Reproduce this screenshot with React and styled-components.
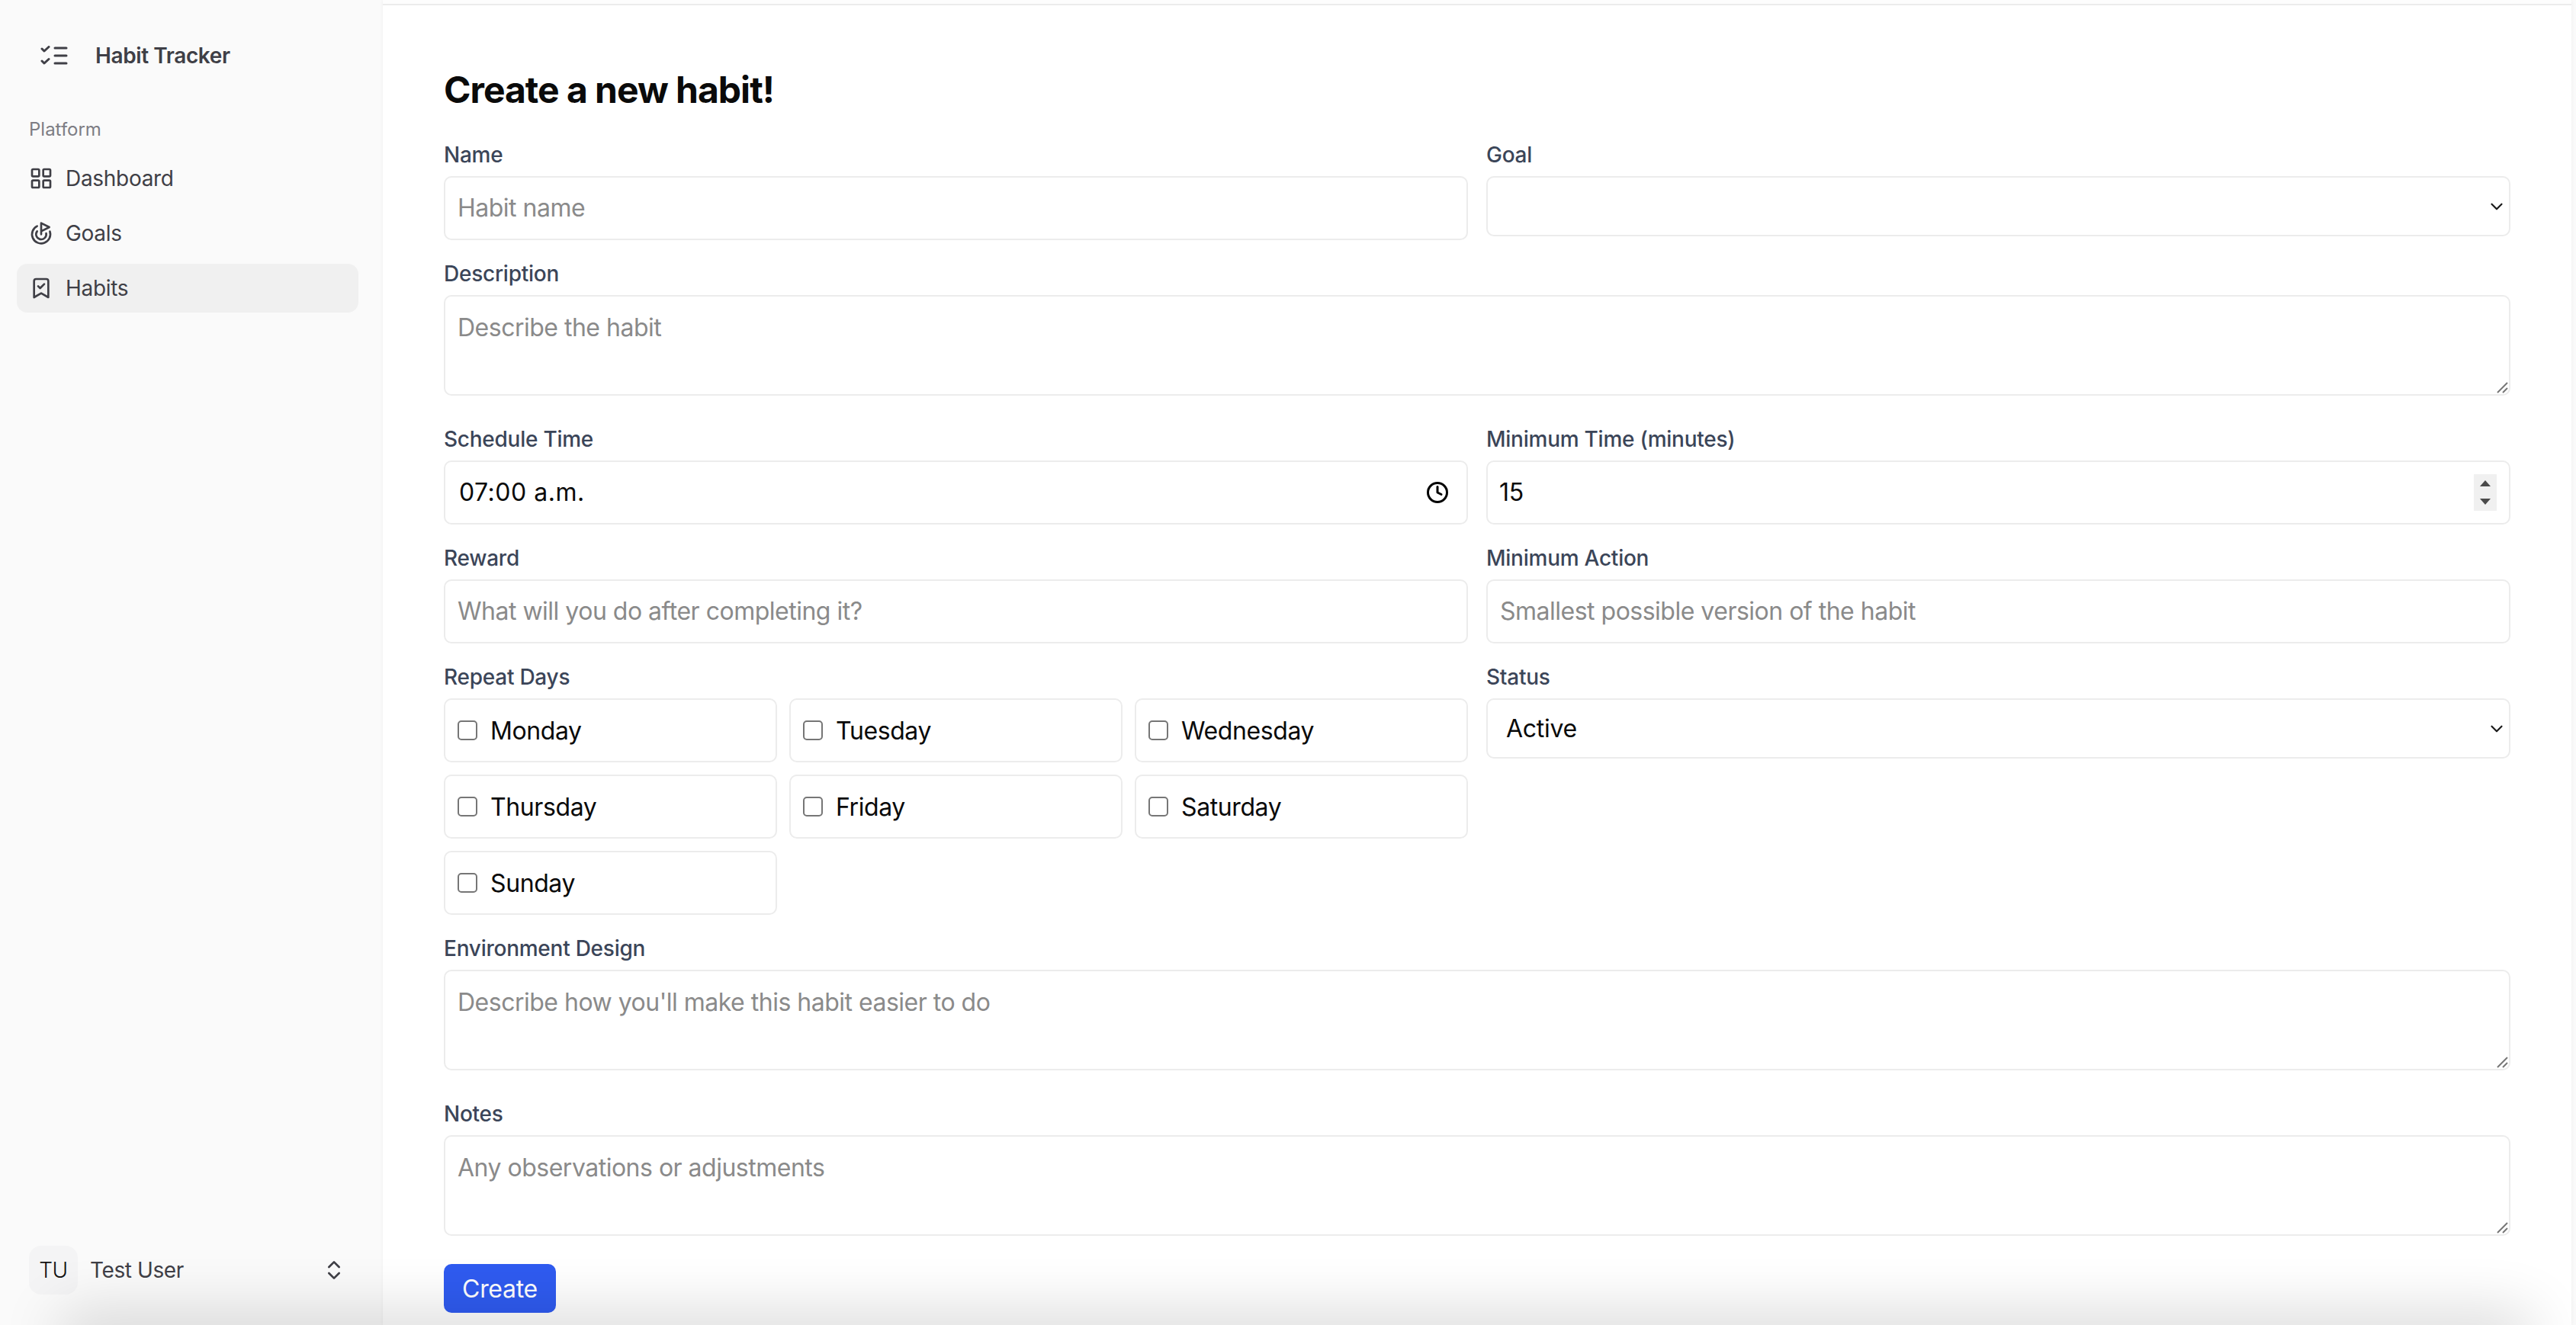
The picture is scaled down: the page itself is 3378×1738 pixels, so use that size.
import React from "react";
import styled, { createGlobalStyle } from "styled-components";
import { LayoutGrid, Goal, BookmarkCheck, ChevronsUpDown, Clock, ChevronDown } from "lucide-react";

const Global = createGlobalStyle`
  html, body { margin: 0; padding: 0; height: 100%; background: #fafafa; overflow: hidden; }
  * { box-sizing: border-box; }
  body { font-family: Inter, "Liberation Sans", sans-serif; }
`;

const Shell = styled.div`
  position: relative;
  display: flex;
  width: 3378px;
  height: 1738px;
  overflow: hidden;
  background: #fafafa;
`;

const Sidebar = styled.aside`
  width: 502px;
  flex: none;
  display: flex;
  flex-direction: column;
  padding: 41px 32px 24px 22px;
  color: #3f3f46;
`;

const Brand = styled.div`
  display: flex;
  align-items: center;
  height: 64px;
  padding-left: 31px;
  gap: 36px;
  font-size: 28px;
  font-weight: 600;
  letter-spacing: -0.4px;
`;

const GroupLabel = styled.div`
  margin-top: 49px;
  padding-left: 16px;
  height: 32px;
  line-height: 32px;
  font-size: 24px;
  color: #7d7d84;
`;

const Menu = styled.nav`
  display: flex;
  flex-direction: column;
  gap: 8px;
  margin-top: 16px;
`;

const MenuItem = styled.div`
  display: flex;
  align-items: center;
  gap: 16px;
  height: 64px;
  padding: 0 16px;
  border-radius: 14px;
  font-size: 28px;
  letter-spacing: -0.3px;
  background: ${(p) => (p.$active ? "#f0f0f0" : "transparent")};
`;

const UserRow = styled.div`
  margin-top: auto;
  display: flex;
  align-items: center;
  height: 64px;
  margin-bottom: 16px;
  padding: 0 16px;
  gap: 16px;
  font-size: 28px;
  letter-spacing: -0.4px;
`;

const Avatar = styled.div`
  width: 64px;
  height: 64px;
  flex: none;
  display: flex;
  align-items: center;
  justify-content: center;
  border-radius: 16px;
  background: #f4f4f5;
  color: #111;
  font-weight: 300;
`;

const UserName = styled.span`
  flex: 1;
`;

const MainFrame = styled.main`
  width: 2870px;
  flex: none;
  padding-top: 5px;
  background: #fdfdfd;
  box-shadow: 0 0 5px rgba(0, 0, 0, 0.05);
`;

const Card = styled.div`
  height: 100%;
  border-top: 2px solid #ececec;
  background: #fff;
  padding: 79px 80px 0;
`;

const Title = styled.h1`
  margin: 0 0 33px;
  font-size: 48px;
  line-height: 64px;
  font-weight: 700;
  letter-spacing: -1px;
  color: #0a0a0a;
`;

const FormGrid = styled.form`
  display: grid;
  grid-template-columns: 1fr 1fr;
  gap: 24px;
  align-items: start;
`;

const Field = styled.div`
  grid-column: ${(p) => (p.$full ? "1 / -1" : "auto")};
  min-width: 0;
`;

const Label = styled.label`
  display: block;
  height: 40px;
  line-height: 40px;
  margin-bottom: 8px;
  font-size: 28px;
  font-weight: 500;
  letter-spacing: -0.25px;
  color: #3b4558;
`;

const Control = styled.div`
  position: relative;
  margin-bottom: ${(p) => (p.$area ? "13px" : "0")};
`;

const boxStyles = `
  display: block;
  width: 100%;
  border: 2px solid #ececec;
  border-radius: 10px;
  background: #fff;
  font-family: inherit;
  font-size: 32px;
  color: #0a0a0a;
  outline: none;
  letter-spacing: -0.3px;
  &::placeholder { color: #8a8a8a; opacity: 1; letter-spacing: -0.5px; }
`;

const TextInput = styled.input`
  ${boxStyles}
  height: 84px;
  padding: 0 16px 2px;
`;

const TimeInput = styled(TextInput)`
  padding-left: 18px;
  letter-spacing: 0.5px;
`;

const NumberInput = styled(TextInput)`
  padding-left: 15px;
  appearance: textfield;
  &::-webkit-inner-spin-button { appearance: none; }
`;

const TextArea = styled.textarea`
  ${boxStyles}
  height: 132px;
  padding: 17px 16px;
  line-height: 48px;
  resize: none;
`;

const Select = styled.select`
  ${boxStyles}
  height: 79px;
  padding: 0 24px;
  appearance: none;
`;

const SelectArrow = styled(ChevronDown)`
  position: absolute;
  right: 5px;
  top: 27px;
  width: 26px;
  height: 26px;
  color: #1a1a1a;
  pointer-events: none;
`;

const ClockIcon = styled(Clock)`
  position: absolute;
  right: 25px;
  top: 27px;
  width: 30px;
  height: 30px;
  color: #000;
  pointer-events: none;
`;

const Spinner = styled.div`
  position: absolute;
  right: 18px;
  top: 18px;
  width: 30px;
  height: 48px;
  background: #f0f0f0;
`;

const Resizer = styled.svg`
  position: absolute;
  right: 3px;
  bottom: 3px;
  width: 15px;
  height: 15px;
  pointer-events: none;
`;

const DaysGrid = styled.div`
  display: grid;
  grid-template-columns: repeat(3, 1fr);
  gap: 16px;
`;

const DayBox = styled.label`
  display: flex;
  align-items: center;
  gap: 17px;
  height: 84px;
  padding: 0 16px;
  border: 2px solid #ececec;
  border-radius: 10px;
  font-size: 32px;
  letter-spacing: -0.4px;
  color: #0a0a0a;
`;

const DayCheck = styled.input`
  appearance: none;
  margin: 0;
  width: 26px;
  height: 26px;
  flex: none;
  background: #fff;
  border: 2px solid #767676;
  border-radius: 5px;
`;

const Submit = styled.button`
  display: block;
  margin-top: 24px;
  width: 147px;
  height: 64px;
  border: 0;
  border-radius: 10px;
  background: #2f5bf0;
  color: #fff;
  font-family: inherit;
  font-size: 32px;
  letter-spacing: -0.3px;
`;

const BottomGlow = styled.div`
  position: absolute;
  left: 90px;
  right: 70px;
  bottom: -30px;
  height: 30px;
  box-shadow: 0 0 80px 10px rgba(0, 0, 0, 0.2);
  pointer-events: none;
`;

const BrandIcon = () => (
  <svg width="36" height="26" viewBox="0 0 36 26" fill="none" stroke="currentColor" strokeWidth="3" strokeLinecap="round" strokeLinejoin="round">
    <path d="M2 4l3 3 6-5.5" />
    <path d="M2 20l3 3 6-5.5" />
    <path d="M19 3h15M19 13h15M19 23h15" />
  </svg>
);

const ResizeHandle = () => (
  <Resizer viewBox="0 0 15 15" fill="none" stroke="#777" strokeWidth="2">
    <path d="M1 14L14 1M8 14l6-6" />
  </Resizer>
);

const DAYS = ["Monday", "Tuesday", "Wednesday", "Thursday", "Friday", "Saturday", "Sunday"];

export default function App() {
  return (
    <Shell>
      <Global />
      <Sidebar>
        <Brand>
          <BrandIcon />
          Habit Tracker
        </Brand>
        <GroupLabel>Platform</GroupLabel>
        <Menu>
          <MenuItem><LayoutGrid size={32} />Dashboard</MenuItem>
          <MenuItem><Goal size={32} />Goals</MenuItem>
          <MenuItem $active><BookmarkCheck size={32} />Habits</MenuItem>
        </Menu>
        <UserRow>
          <Avatar>TU</Avatar>
          <UserName>Test User</UserName>
          <ChevronsUpDown size={32} />
        </UserRow>
      </Sidebar>
      <MainFrame>
        <Card>
          <Title>Create a new habit!</Title>
          <FormGrid onSubmit={(e) => e.preventDefault()}>
            <Field>
              <Label>Name</Label>
              <Control><TextInput placeholder="Habit name" /></Control>
            </Field>
            <Field>
              <Label>Goal</Label>
              <Control>
                <Select defaultValue=""><option value=""></option></Select>
                <SelectArrow strokeWidth={2} />
              </Control>
            </Field>
            <Field $full>
              <Label>Description</Label>
              <Control $area>
                <TextArea placeholder="Describe the habit" />
                <ResizeHandle />
              </Control>
            </Field>
            <Field>
              <Label>Schedule Time</Label>
              <Control>
                <TimeInput readOnly value="07:00 a.m." />
                <ClockIcon strokeWidth={2.4} />
              </Control>
            </Field>
            <Field>
              <Label>Minimum Time (minutes)</Label>
              <Control>
                <NumberInput type="number" readOnly value="15" />
                <Spinner>
                  <svg width="30" height="48" viewBox="0 0 30 48" fill="#4a4a4a">
                    <path d="M15 8l7 8H8zM8 32h14l-7 8z" />
                  </svg>
                </Spinner>
              </Control>
            </Field>
            <Field>
              <Label>Reward</Label>
              <Control><TextInput placeholder="What will you do after completing it?" /></Control>
            </Field>
            <Field>
              <Label>Minimum Action</Label>
              <Control><TextInput placeholder="Smallest possible version of the habit" /></Control>
            </Field>
            <Field>
              <Label>Repeat Days</Label>
              <DaysGrid>
                {DAYS.map((d) => (
                  <DayBox key={d}><DayCheck type="checkbox" />{d}</DayBox>
                ))}
              </DaysGrid>
            </Field>
            <Field>
              <Label>Status</Label>
              <Control>
                <Select defaultValue="active"><option value="active">Active</option></Select>
                <SelectArrow strokeWidth={2} />
              </Control>
            </Field>
            <Field $full>
              <Label>Environment Design</Label>
              <Control $area>
                <TextArea placeholder="Describe how you'll make this habit easier to do" />
                <ResizeHandle />
              </Control>
            </Field>
            <Field $full>
              <Label>Notes</Label>
              <Control $area>
                <TextArea placeholder="Any observations or adjustments" />
                <ResizeHandle />
              </Control>
            </Field>
          </FormGrid>
          <Submit type="submit">Create</Submit>
        </Card>
      </MainFrame>
      <BottomGlow />
    </Shell>
  );
}
